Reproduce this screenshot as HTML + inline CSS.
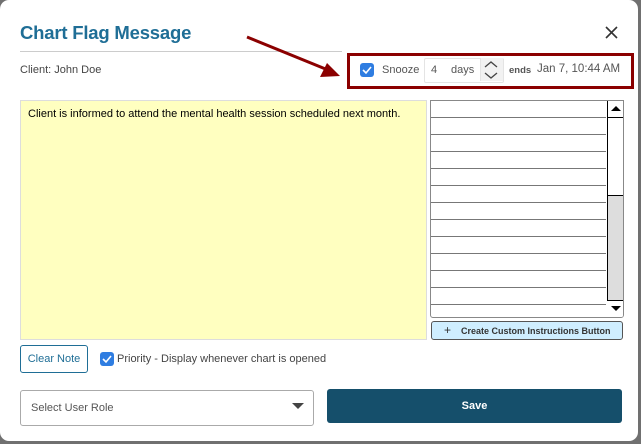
<!DOCTYPE html>
<html><head><style>
body{margin:0;width:641px;height:444px;background:#707070;position:relative;overflow:hidden;font-family:"Liberation Sans",sans-serif}
.m{position:absolute;left:0;top:0;width:638px;height:441px;background:#fff;border-radius:9px}
.a{position:absolute}
.cb{position:absolute;width:14px;height:14px;background:#2f7de1;border-radius:3px}
.cb svg{position:absolute;left:2px;top:2px}
.row{position:absolute;left:0;width:175px;border-bottom:1px solid #777}
</style></head><body>
<div class="m">
<div class="a" style="left:20px;top:22px;font-size:18.5px;font-weight:bold;color:#1f6e96;letter-spacing:-0.2px">Chart Flag Message</div>
<svg class="a" style="left:605px;top:26px" width="13" height="13"><path d="M1 1 L12 12 M12 1 L1 12" stroke="#333" stroke-width="1.6"/></svg>
<div class="a" style="left:20px;top:51px;width:322px;height:1px;background:#ccc"></div>
<div class="a" style="left:20px;top:64px;font-size:11px;color:#444">Client: John Doe</div>
<svg class="a" style="left:240px;top:30px" width="110" height="55"><line x1="7" y1="7" x2="88" y2="40" stroke="#8b0000" stroke-width="3"/><polygon points="100,46 80,47 87,33" fill="#8b0000"/></svg>
<div class="a" style="left:347px;top:53px;width:281px;height:30px;border:3px solid #8b0000"></div>
<div class="cb" style="left:360px;top:63px"><svg width="10" height="10"><path d="M1 5 L4 8 L9 2" stroke="#fff" stroke-width="1.6" fill="none"/></svg></div>
<div class="a" style="left:382px;top:64px;font-size:11px;color:#555">Snooze</div>
<div class="a" style="left:424px;top:58px;width:78px;height:23px;border:1px solid #e4e4e4;border-radius:2px"></div>
<div class="a" style="left:480px;top:58px;width:22px;height:23px;background:#f2f2f2;border-left:1px solid #e4e4e4"></div>
<svg class="a" style="left:483px;top:59px" width="16" height="22"><path d="M2 8 L8 3 L14 8 M2 14 L8 19 L14 14" stroke="#444" stroke-width="1.3" fill="none"/></svg>
<div class="a" style="left:431px;top:64px;font-size:11px;color:#555">4</div>
<div class="a" style="left:451px;top:64px;font-size:11px;color:#555">days</div>
<div class="a" style="left:509px;top:65px;font-size:9.5px;font-weight:bold;color:#555">ends</div>
<div class="a" style="left:537px;top:63px;font-size:11.5px;color:#555">Jan 7, 10:44 AM</div>
<div class="a" style="left:20px;top:100px;width:405px;height:238px;background:#ffffc0;border:1px solid #ddd"></div>
<div class="a" style="left:28px;top:108px;font-size:11px;color:#000">Client is informed to attend the mental health session scheduled next month.</div>
<div class="a" style="left:430px;top:100px;width:192px;height:216px;border:1px solid #888;border-radius:0 0 3px 3px;overflow:hidden;background:#fff">
<div class="row" style="top:0;height:16px"></div><div class="row" style="top:17px;height:16px"></div><div class="row" style="top:34px;height:16px"></div><div class="row" style="top:51px;height:16px"></div><div class="row" style="top:68px;height:16px"></div><div class="row" style="top:85px;height:16px"></div><div class="row" style="top:102px;height:16px"></div><div class="row" style="top:119px;height:16px"></div><div class="row" style="top:136px;height:16px"></div><div class="row" style="top:153px;height:16px"></div><div class="row" style="top:170px;height:16px"></div><div class="row" style="top:187px;height:16px"></div>
<div class="a" style="left:176px;top:0;width:16px;height:216px;background:#ddd;border-left:1px solid #000"></div>
<div class="a" style="left:176px;top:0;width:15px;height:94px;background:#fff;border:1px solid #000;border-top:none"></div>
<div class="a" style="left:176px;top:16px;width:16px;height:1px;background:#000"></div>
<div class="a" style="left:176px;top:199px;width:16px;height:17px;background:#fff;border-top:1px solid #000"></div>
<svg class="a" style="left:180px;top:5px" width="10" height="6"><polygon points="0,5 5,0 10,5" fill="#000"/></svg>
<svg class="a" style="left:180px;top:205px" width="10" height="6"><polygon points="0,0 5,5 10,0" fill="#000"/></svg>
</div>
<div class="a" style="left:431px;top:321px;width:190px;height:17px;background:#cfeeff;border:1px solid #555;border-radius:3px;font-size:9px;font-weight:bold;color:#333;line-height:17px"><span style="margin-left:12px;font-weight:normal;font-size:12px">+</span><span style="margin-left:10px">Create Custom Instructions Button</span></div>
<div class="a" style="left:20px;top:345px;width:66px;height:26px;border:1px solid #1f6e96;border-radius:3px;font-size:11px;color:#1f6e96;text-align:center;line-height:27px">Clear Note</div>
<div class="cb" style="left:100px;top:352px"><svg width="10" height="10"><path d="M1 5 L4 8 L9 2" stroke="#fff" stroke-width="1.6" fill="none"/></svg></div>
<div class="a" style="left:117px;top:353px;font-size:11px;color:#444">Priority - Display whenever chart is opened</div>
<div class="a" style="left:20px;top:390px;width:292px;height:34px;border:1px solid #aaa;border-radius:3px"></div>
<div class="a" style="left:31px;top:402px;font-size:11px;color:#555">Select User Role</div>
<svg class="a" style="left:292px;top:403px" width="12" height="7"><polygon points="0,0 12,0 6,6" fill="#444"/></svg>
<div class="a" style="left:327px;top:389px;width:295px;height:34px;background:#154f6b;border-radius:3px;color:#fff;font-size:11px;font-weight:bold;text-align:center;line-height:35px">Save</div>
</div>
</body></html>
